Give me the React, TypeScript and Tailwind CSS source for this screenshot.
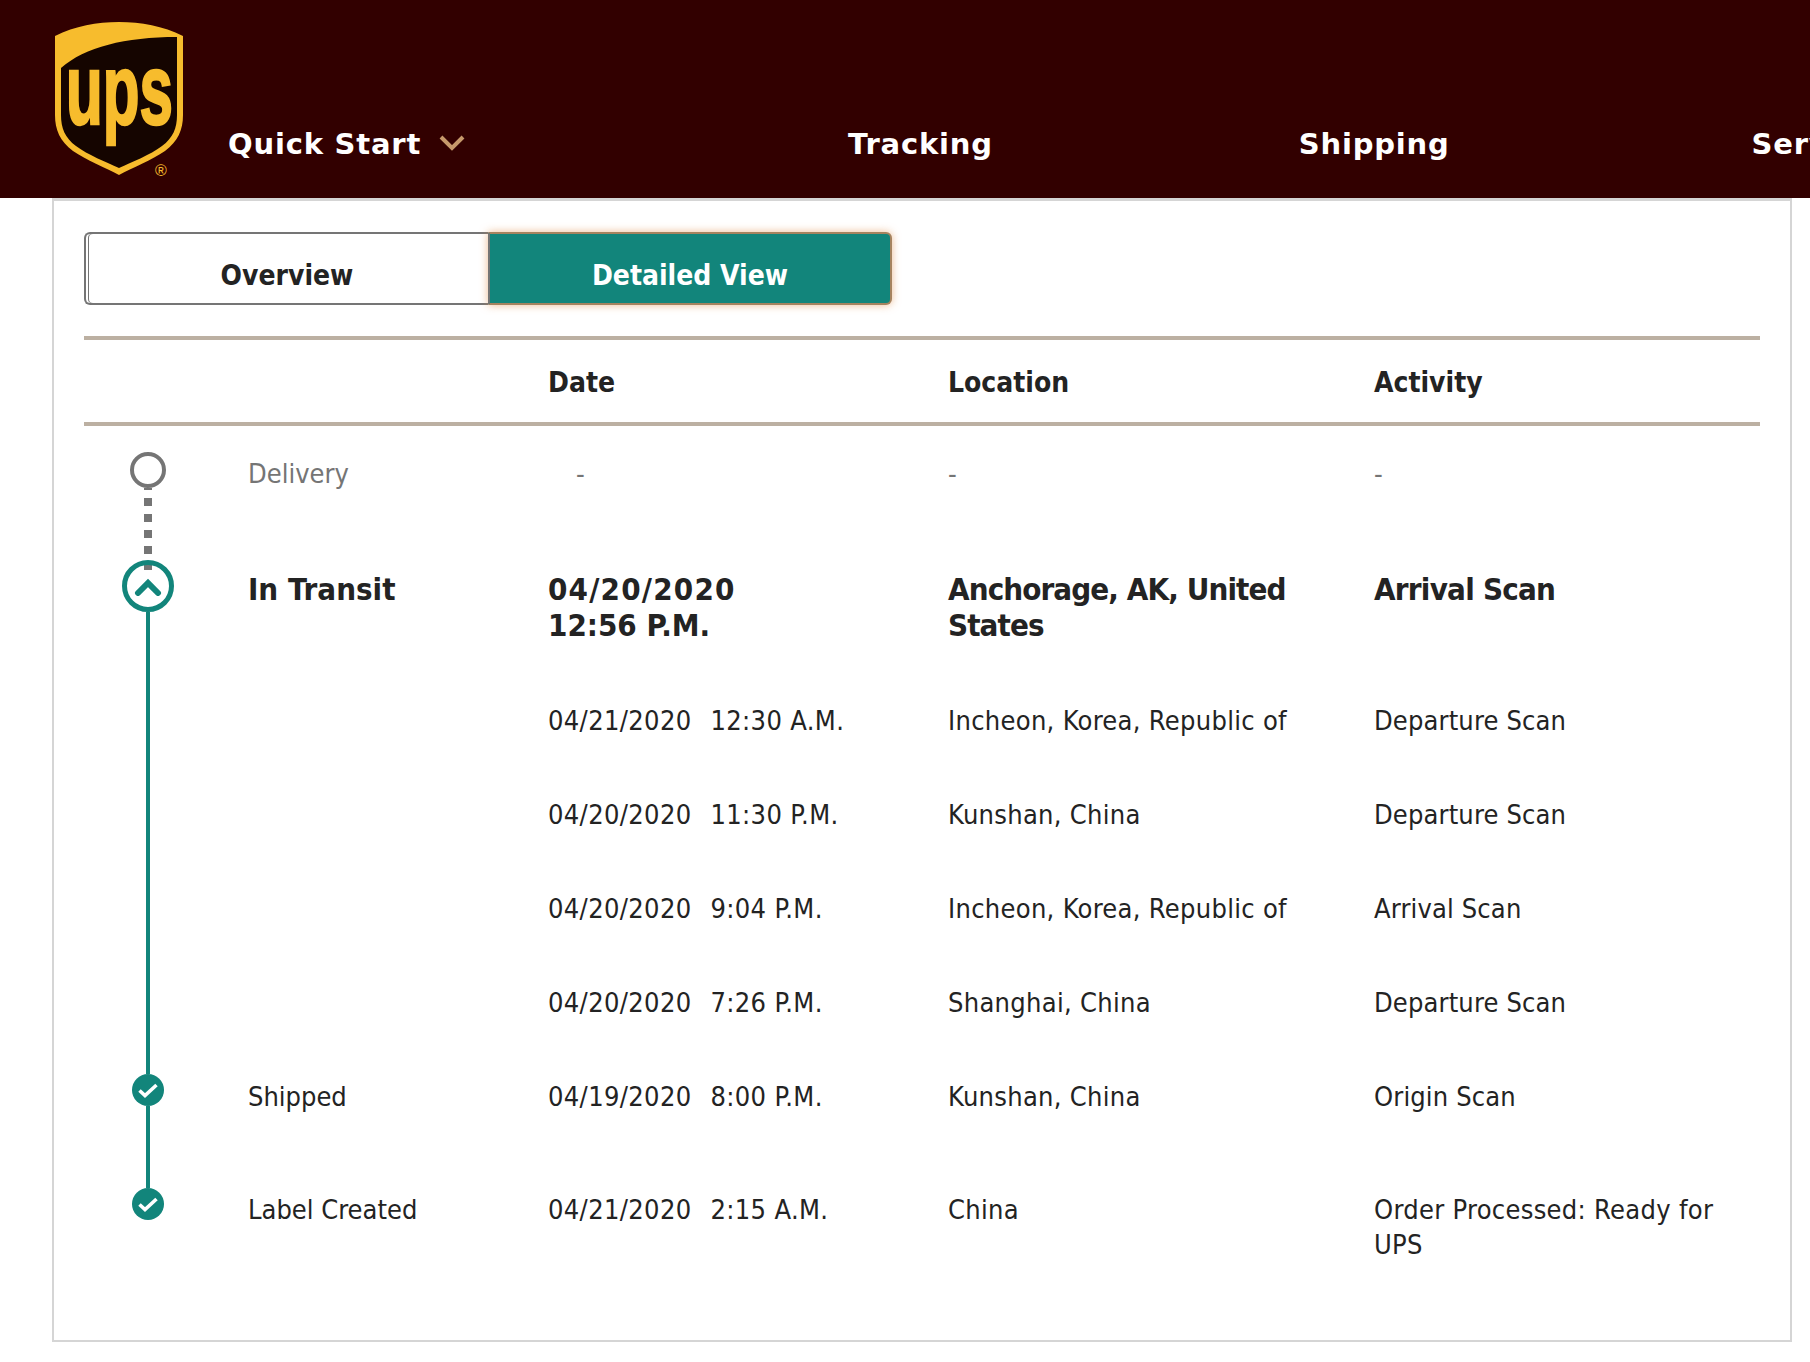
const rows = [
  { date: "04/21/2020", time: "12:30 A.M.", location: "Incheon, Korea, Republic of", activity: "Departure Scan" },
  { date: "04/20/2020", time: "11:30 P.M.", location: "Kunshan, China", activity: "Departure Scan" },
  { date: "04/20/2020", time: "9:04 P.M.", location: "Incheon, Korea, Republic of", activity: "Arrival Scan" },
  { date: "04/20/2020", time: "7:26 P.M.", location: "Shanghai, China", activity: "Departure Scan" },
];

function UpsLogo() {
  return (
    <svg width="140" height="165" viewBox="50 18 140 165" className="shrink-0">
      <path
        d="M55 36 C75 26 97 22 119 22 C141 22 163 26 183 36 L183 115 C183 130 178 141 165 151 C152 160 132 168 119 175 C106 168 86 160 73 151 C60 141 55 130 55 115 Z"
        fill="#f7bc2d"
      />
      <path
        d="M61 68 C85 47 125 37 177 37 L177 115 C177 128 173 138 162 146 C150 155 132 162 119 168 C106 162 88 155 76 146 C65 138 61 128 61 115 Z"
        fill="#150500"
      />
      <text
        x="66"
        y="124"
        fontFamily="'Liberation Sans', sans-serif"
        fontWeight="700"
        fontSize="100"
        textLength="107"
        lengthAdjust="spacingAndGlyphs"
        fill="#f7bc2d"
        stroke="#f7bc2d"
        strokeWidth="2.5"
      >
        ups
      </text>
      <text x="155" y="176" fontFamily="'Liberation Sans', sans-serif" fontSize="16" fill="#f7bc2d">
        ®
      </text>
    </svg>
  );
}

function CheckDot() {
  return (
    <div className="flex h-8 w-8 shrink-0 items-center justify-center rounded-full bg-[#12857b]">
      <svg width="20" height="20" viewBox="0 0 20 20" fill="none">
        <path d="M1.5 10.5 L7 15.5 L18.5 5" stroke="#fff" strokeWidth="3.6" />
      </svg>
    </div>
  );
}

function Row({
  icon,
  rail,
  status,
  date,
  location,
  activity,
  className,
  textClass,
  statusClass = "",
  dateClass = "tracking-[0.35px]",
  placeClass = "tracking-[0.3px]",
  activityClass = "tracking-[0.15px]",
}: {
  icon?: React.ReactNode;
  rail?: React.ReactNode;
  status?: string;
  date?: React.ReactNode;
  location?: React.ReactNode;
  activity?: React.ReactNode;
  className: string;
  textClass: string;
  statusClass?: string;
  dateClass?: string;
  placeClass?: string;
  activityClass?: string;
}) {
  return (
    <div className={`grid grid-cols-[128px_36px_300px_400px_426px_1fr] ${className}`}>
      <div className="flex flex-col items-center">
        {icon}
        {rail}
      </div>
      <div />
      <div className={`${textClass} ${statusClass}`}>{status}</div>
      <div className={`${textClass} ${dateClass}`}>{date}</div>
      <div className={`${textClass} ${placeClass}`}>{location}</div>
      <div className={`${textClass} ${activityClass}`}>{activity}</div>
    </div>
  );
}

const tealRail = <div className="w-1 flex-1 bg-[#12857b]" />;

const dottedRail = (
  <div className="flex flex-1 flex-col items-center gap-2 overflow-hidden">
    <div className="h-0.5 w-2 shrink-0 bg-[#757575]" />
    <div className="h-2 w-2 shrink-0 bg-[#757575]" />
    <div className="h-2 w-2 shrink-0 bg-[#757575]" />
    <div className="h-2 w-2 shrink-0 bg-[#757575]" />
    <div className="h-2 w-2 shrink-0 bg-[#757575]" />
    <div className="h-2 w-2 shrink-0 bg-[#757575]" />
  </div>
);

export default function App() {
  return (
    <div
      className="h-[1362px] w-[1810px] overflow-hidden bg-white text-[27px] leading-[36px] text-[#232323]"
      style={{ fontFamily: "'DejaVu Sans', sans-serif", fontStretch: "condensed" }}
    >
      <header className="flex h-[198px] items-start bg-[#320000] pl-[50px] pt-[18px] text-white">
        <UpsLogo />
        <nav
          className="flex shrink-0 items-center pl-[38px] pt-[108px] text-[29px] font-bold leading-[36px] tracking-[0.8px]"
          style={{ fontFamily: "'DejaVu Sans', sans-serif", fontStretch: "normal" }}
        >
          <span>Quick Start</span>
          <svg width="26" height="16" viewBox="0 0 26 16" fill="none" className="ml-[18px] mt-[-2px]">
            <path d="M2 2 L13 13 L24 2" stroke="#c6996b" strokeWidth="4" />
          </svg>
          <span className="ml-[383px]">Tracking</span>
          <span className="ml-[306px]">Shipping</span>
          <span className="ml-[302px]">Services</span>
        </nav>
      </header>

      <main className="ml-[52px] mr-[18px] h-[1144px] border-2 border-t-[3px] border-[#d5d5d5] px-[30px] pt-[31px]">
        <div className="flex h-[73px] w-[808px] text-[28px] font-bold">
          <button className="w-[404px] rounded-l-[6px] border-2 border-r-0 border-[#757575] bg-white pt-[14px] shadow-[inset_2px_0_0_#fff,inset_3px_0_0_#757575]">
            Overview
          </button>
          <button className="w-[404px] rounded-r-[6px] border-2 border-[#a5835f] border-l-[#757575] bg-[#12857b] pt-[14px] text-white shadow-[0_0_8px_rgba(224,140,70,0.6)]">
            Detailed View
          </button>
        </div>

        <div className="mt-[31px] grid h-[90px] grid-cols-[464px_400px_426px_1fr] items-center border-y-4 border-[#bcb0a2] pt-[4px] text-[28px] font-bold">
          <div />
          <div>Date</div>
          <div>Location</div>
          <div>Activity</div>
        </div>

        <div className="pt-[26px]">
          <Row
            className="h-[108px]"
            textClass="pt-1"
            statusClass="text-[#757575]"
            icon={<div className="h-9 w-9 shrink-0 rounded-full border-4 border-[#757575]" />}
            rail={dottedRail}
            status="Delivery"
            date={<span className="pl-[28px] text-[#757575]">-</span>}
            location={<span className="text-[#757575]">-</span>}
            activity={<span className="text-[#757575]">-</span>}
          />
          <Row
            className="h-[112px] text-[31px] font-bold"
            textClass="pt-[11px]"
            dateClass=""
            placeClass="tracking-[-0.9px]"
            activityClass="tracking-[-0.75px]"
            icon={
              <div className="flex h-[52px] w-[52px] shrink-0 items-center justify-center rounded-full border-[5px] border-[#12857b]">
                <svg width="28" height="18" viewBox="0 0 28 18" fill="none" className="mt-[2px]">
                  <path d="M4 15 L14 5 L24 15" stroke="#12857b" strokeWidth="6" strokeLinecap="round" />
                </svg>
              </div>
            }
            rail={tealRail}
            status="In Transit"
            date={
              <>
                <span className="tracking-[1.2px]">04/20/2020</span>
                <br />
                12:56 P.M.
              </>
            }
            location="Anchorage, AK, United States"
            activity="Arrival Scan"
          />
          {rows.map((row, i) => (
            <Row
              key={i}
              className={i === 3 ? "h-[120px]" : "h-[94px]"}
              textClass="pt-[31px]"
              rail={tealRail}
              date={
                <>
                  {row.date}
                  <span className="ml-[19px]">{row.time}</span>
                </>
              }
              location={row.location}
              activity={row.activity}
            />
          ))}
          <Row
            className="h-[114px]"
            textClass="pt-[5px]"
            icon={<CheckDot />}
            rail={tealRail}
            status="Shipped"
            date={
              <>
                04/19/2020<span className="ml-[19px]">8:00 P.M.</span>
              </>
            }
            location="Kunshan, China"
            activity="Origin Scan"
          />
          <Row
            className="h-[100px]"
            textClass="pt-1"
            activityClass="tracking-[0.3px] leading-[35px]"
            icon={<CheckDot />}
            status="Label Created"
            date={
              <>
                04/21/2020<span className="ml-[19px]">2:15 A.M.</span>
              </>
            }
            location="China"
            activity="Order Processed: Ready for UPS"
          />
        </div>
      </main>
    </div>
  );
}
